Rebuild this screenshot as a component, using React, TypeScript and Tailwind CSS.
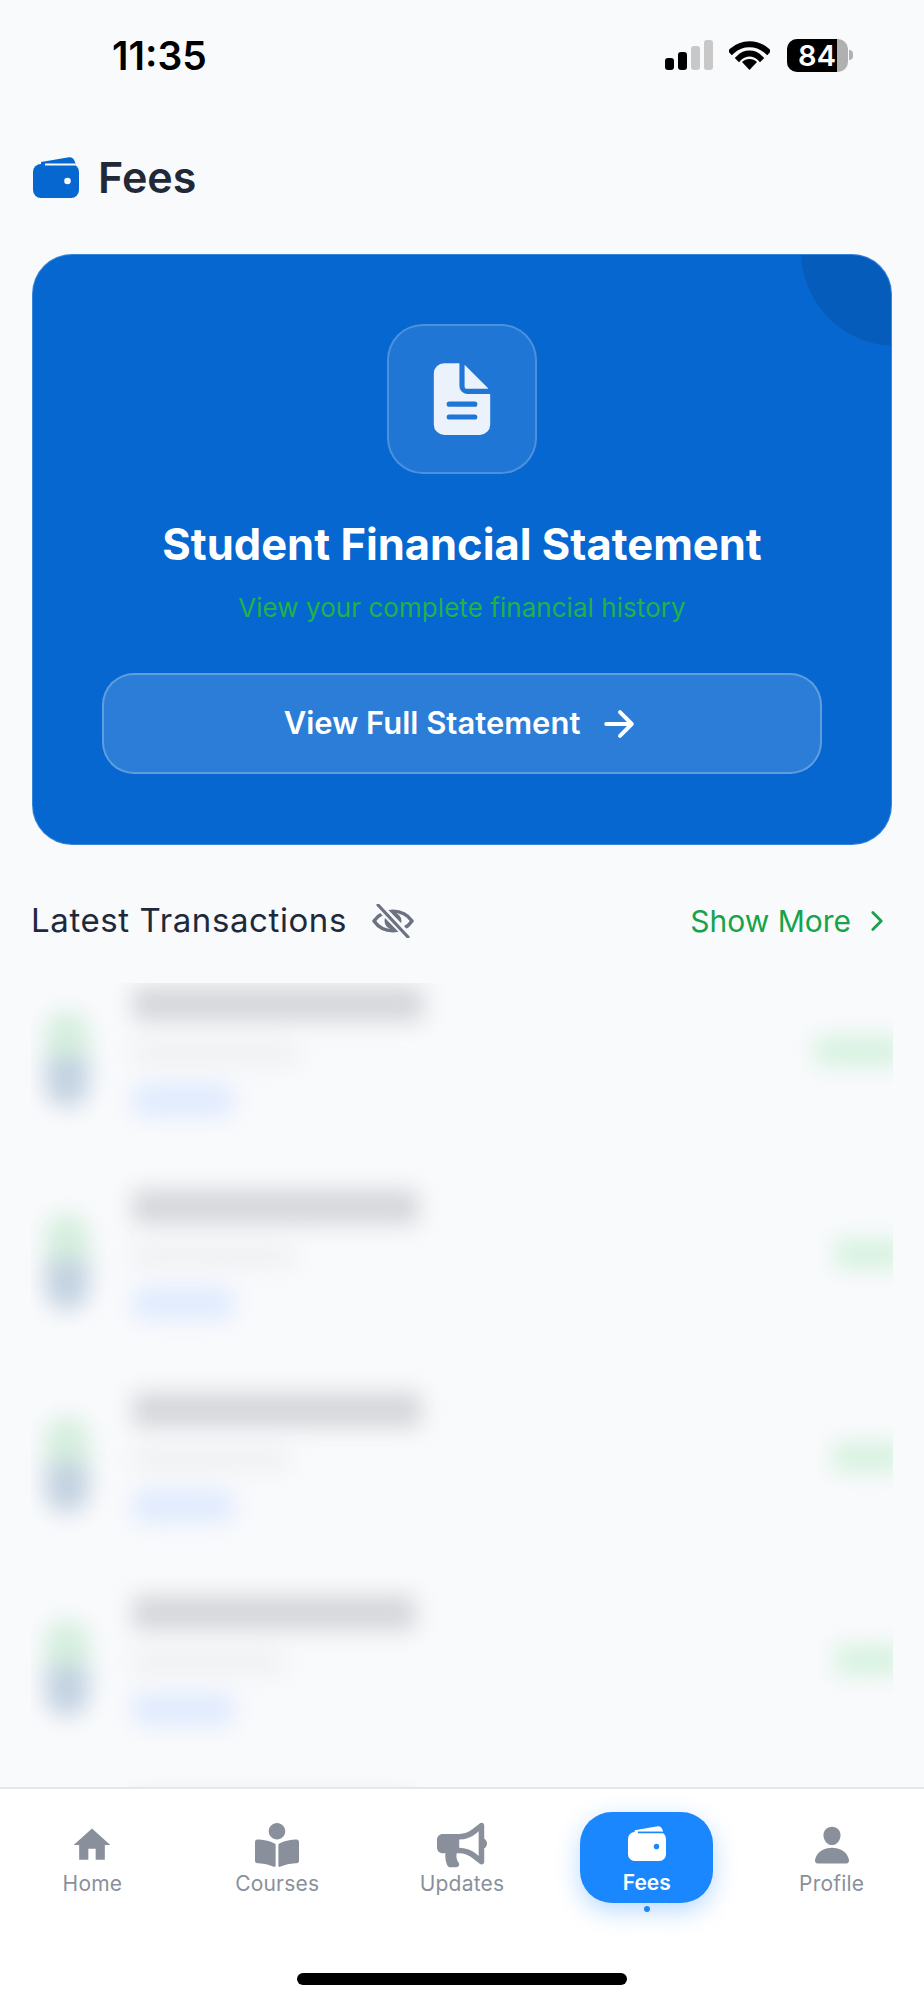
import React from 'react';
import { FaBookReader, FaBullhorn } from 'react-icons/fa';
import { IoArrowForward, IoChevronForward, IoDocumentText, IoPerson } from 'react-icons/io5';
import { MdHome } from 'react-icons/md';

const font = { fontFamily: 'Inter, "Noto Sans", sans-serif' };

// blurred transaction rows: width of title, subtitle and amount
const rows = [
  { title: 290, sub: 165, amount: 78 },
  { title: 285, sub: 160, amount: 58 },
  { title: 288, sub: 155, amount: 60 },
  { title: 282, sub: 150, amount: 58 },
  { title: 280, sub: 150, amount: 58 },
];

const WalletIcon = ({ className, hole }: { className: string; hole: string }) => (
  <svg className={className} viewBox="0 0 46 41" preserveAspectRatio="none">
    <path d="M8 5 L36 0.3 C39 0 41 2 42 5 L42.5 7 L8 7 Z" fill="currentColor" />
    <rect x="0" y="7" width="46" height="34" rx="8" fill="currentColor" />
    <rect x="12" y="6.5" width="30" height="2" fill={hole} />
    <circle cx="34.5" cy="24" r="3.3" fill={hole} />
  </svg>
);

const EyeOffIcon = () => (
  <svg className="ml-[25px]" width="42" height="34" viewBox="0 0 42 34">
    <path d="M2 17 C11 4 31 4 40 17 C31 30 11 30 2 17 Z" fill="none" stroke="#6b7280" strokeWidth="3.5" strokeLinejoin="round" />
    <circle cx="21" cy="17" r="8.5" fill="#6b7280" />
    <path d="M5 0 L37 33" stroke="#f9fafc" strokeWidth="8" />
    <path d="M6 1 L36 33" stroke="#6b7280" strokeWidth="3.2" strokeLinecap="round" />
  </svg>
);

const tabs = [
  { label: 'Home', icon: <MdHome className="text-[44px]" /> },
  { label: 'Courses', icon: <FaBookReader className="text-[44px]" /> },
  { label: 'Updates', icon: <FaBullhorn className="text-[50px]" /> },
  { label: 'Fees', active: true },
  { label: 'Profile', icon: <IoPerson className="text-[42px]" /> },
];

const StatusBar = () => (
  <div className="h-[110px] flex items-center justify-between pl-[112px] pr-[71px] text-black">
    <span className="text-[39px] font-semibold leading-none">11:35</span>
    <div className="flex items-center">
      <div className="flex items-end gap-[4px] h-[30px]">
        <div className="w-[9px] h-[12px] rounded-[3px] bg-black" />
        <div className="w-[9px] h-[18px] rounded-[3px] bg-black" />
        <div className="w-[9px] h-[24px] rounded-[3px] bg-[#c8c8c8]" />
        <div className="w-[9px] h-[30px] rounded-[3px] bg-[#c8c8c8]" />
      </div>
      <svg className="ml-[16px]" width="41" height="30" viewBox="0 0 41 30">
        <path d="M3 11 C13 2 28 2 38 11" fill="none" stroke="#000" strokeWidth="6" strokeLinecap="square" />
        <path d="M10 18 C16 12 25 12 31 18" fill="none" stroke="#000" strokeWidth="6" strokeLinecap="square" />
        <path d="M13 22 C17 18 24 18 28 22 L20.5 30 Z" fill="#000" />
      </svg>
      <div className="ml-[17px] flex items-center">
        <div className="w-[61px] h-[33px] rounded-[10px] bg-[#b0b0b0] overflow-hidden">
          <div className="w-[50px] h-full bg-black text-white text-[29px] font-semibold leading-[33px] text-right pr-[1px]">
            84
          </div>
        </div>
        <div className="ml-[1px] w-[4px] h-[10px] rounded-r-full bg-[#b0b0b0]" />
      </div>
    </div>
  </div>
);

const FinancialCard = () => (
  <div className="relative mx-[32px] mt-[10px] h-[591px] rounded-[40px] overflow-hidden border border-white/20 bg-[#0667d0] flex flex-col items-center pt-[69px]">
    <div className="absolute -top-[99px] -right-[100px] w-[190px] h-[190px] rounded-full bg-black/10" />
    <div className="w-[150px] h-[150px] rounded-[36px] border-2 border-white/20 bg-white/10 flex items-center justify-center">
      <IoDocumentText className="text-[82px] text-[#ebf2fb]" />
    </div>
    <h2 className="mt-[45px] text-[43.5px] leading-[50px] font-bold text-white">Student Financial Statement</h2>
    <p className="mt-[23px] text-[26px] leading-[32px] tracking-[0.05px] text-[#22b24a]">
      View your complete financial history
    </p>
    <button className="mt-[49px] w-[720px] h-[101px] rounded-[32px] border-2 border-white/25 bg-white/15 flex items-center justify-center gap-[18px] text-white text-[31px] font-semibold">
      View Full Statement
      <IoArrowForward className="text-[42px]" />
    </button>
  </div>
);

const BlurredList = () => (
  <div className="flex-1 mx-[31px] mt-[42px] overflow-hidden">
    {rows.map((row, i) => (
      <div key={i} className="h-[203px] flex justify-between blur-[11px] pt-[4px]">
        <div className="flex">
          <div className="ml-[14px] mt-[24px] w-[44px]">
            <div className="h-[46px] rounded-t-full bg-[#d4eedd]" />
            <div className="h-[50px] rounded-b-full bg-[#c3d2e1]" />
          </div>
          <div className="ml-[44px]">
            <div className="h-[34px] rounded bg-[#d4d5d9]" style={{ width: row.title }} />
            <div className="mt-[22px] h-[20px] rounded bg-[#eeeff1]" style={{ width: row.sub }} />
            <div className="mt-[21px] w-[100px] h-[32px] rounded-lg bg-[#dfeafe]" />
          </div>
        </div>
        <div className="mt-[49px] h-[30px] rounded bg-[#d6f2df] -mr-[10px]" style={{ width: row.amount + 10 }} />
      </div>
    ))}
  </div>
);

const BottomNav = () => (
  <div className="relative h-[213px] shrink-0 bg-white border-t-2 border-[#e5e7eb]">
    <div className="grid grid-cols-5 h-[118px] pt-[23px]">
      {tabs.map(tab => (
        <div key={tab.label} className="relative flex justify-center">
          {tab.active ? (
            <>
              <div className="w-[133px] h-[91px] rounded-[32px] bg-[#1a87ff] shadow-[0_8px_24px_rgba(26,135,255,0.3)] text-white flex flex-col items-center pt-[14px]">
                <WalletIcon className="w-[38px] h-[35px]" hole="#1a87ff" />
                <span className="mt-[8px] text-[21px] leading-[28px] font-semibold">{tab.label}</span>
              </div>
              <div className="absolute top-[94px] w-[6px] h-[6px] rounded-full bg-[#1a87ff]" />
            </>
          ) : (
            <div className="text-[#8a909b] flex flex-col items-center pt-[10px]">
              <div className="h-[46px] flex items-center justify-center">{tab.icon}</div>
              <span className="mt-[2px] text-[21px] leading-[28px] tracking-[0.2px]">{tab.label}</span>
            </div>
          )}
        </div>
      ))}
    </div>
    <div className="mt-[66px] mx-auto w-[330px] h-[12px] rounded-full bg-black" />
  </div>
);

export default function App() {
  return (
    <div className="w-[924px] h-[2000px] flex flex-col overflow-hidden bg-[#f9fafc]" style={font}>
      <StatusBar />
      <div className="h-[134px] flex items-center pl-[33px]">
        <WalletIcon className="w-[46px] h-[41px] text-[#0667d0]" hole="#f9fafc" />
        <h1 className="ml-[19px] text-[43px] font-semibold text-[#1f2937]">Fees</h1>
      </div>
      <FinancialCard />
      <div className="mt-[56px] flex items-center justify-between pl-[31px] pr-[32px] h-[40px]">
        <div className="flex items-center">
          <span className="text-[33px] tracking-[0.6px] text-[#1e293b]">Latest Transactions</span>
          <EyeOffIcon />
        </div>
        <div className="flex items-center text-[#16a34a]">
          <span className="text-[30px]">Show More</span>
          <IoChevronForward className="ml-[11px] text-[30px]" />
        </div>
      </div>
      <BlurredList />
      <BottomNav />
    </div>
  );
}
